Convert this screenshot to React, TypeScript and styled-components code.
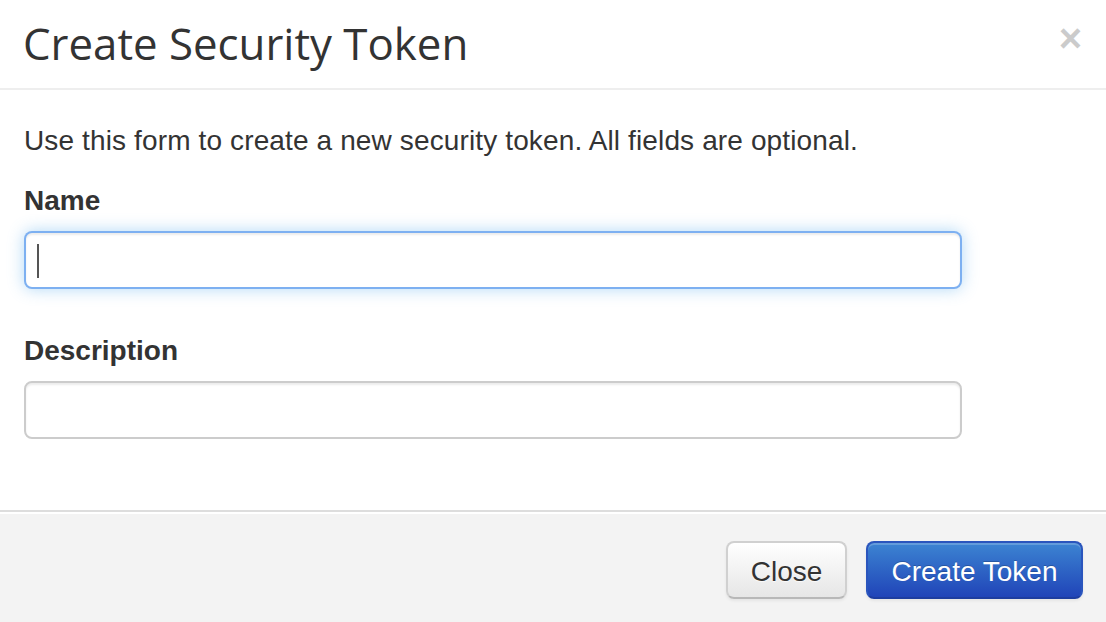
import React from "react";
import styled, { createGlobalStyle } from "styled-components";

const Global = createGlobalStyle`
  html, body { margin: 0; padding: 0; background: #fff; }
  body { font-family: "Liberation Sans", Arial, sans-serif; color: #333; }
  * { box-sizing: border-box; }
`;

const Dialog = styled.div`
  width: 1106px;
  height: 622px;
  display: flex;
  flex-direction: column;
  background: #fff;
  overflow: hidden;
`;

const Header = styled.div`
  height: 90px;
  flex: none;
  display: flex;
  align-items: center;
  justify-content: space-between;
  padding: 0 24px 0 23px;
  border-bottom: 2px solid #eeeeee;
`;

const Title = styled.h3`
  margin: 0;
  font-family: "Open Sans", "Noto Sans", sans-serif;
  font-weight: 400;
  font-size: 43.8px;
  line-height: 60px;
  color: #333;
  padding-bottom: 2px;
`;

const CloseX = styled.button`
  border: 0;
  background: none;
  padding: 0;
  margin-top: -12px;
  font-family: "Liberation Sans", Arial, sans-serif;
  font-weight: 700;
  font-size: 40px;
  line-height: 40px;
  color: #000;
  opacity: 0.2;
  cursor: pointer;
`;

const Body = styled.div`
  flex: none;
  height: 420px;
  padding: 31px 24px 0 24px;
`;

const Intro = styled.p`
  margin: 0 0 20px;
  font-size: 28px;
  line-height: 40px;
  letter-spacing: 0.13px;
`;

const Field = styled.div<{ $gap?: number }>`
  position: relative;
  margin-bottom: ${(p) => p.$gap ?? 0}px;
`;

const Label = styled.label`
  display: block;
  font-size: 28px;
  line-height: 40px;
  font-weight: 700;
  margin-bottom: 10px;
`;

const Input = styled.input<{ $focused?: boolean }>`
  display: block;
  width: 938px;
  height: 58px;
  padding: 8px 14px;
  font-family: "Liberation Sans", Arial, sans-serif;
  font-size: 28px;
  color: #555;
  background: #fff;
  border-radius: 8px;
  outline: none;
  border: 2px solid ${(p) => (p.$focused ? "rgba(82,150,236,0.75)" : "#cccccc")};
  box-shadow: ${(p) =>
    p.$focused
      ? "inset 0 2px 2px rgba(0,0,0,0.075), 0 0 16px rgba(82,168,236,0.45)"
      : "inset 0 2px 2px rgba(0,0,0,0.075)"};
`;

const Caret = styled.span`
  position: absolute;
  left: 13px;
  top: 63px;
  width: 2px;
  height: 34px;
  background: #555;
`;

const Footer = styled.div`
  flex: 1;
  display: flex;
  justify-content: flex-end;
  align-items: flex-start;
  gap: 19px;
  padding: 29px 23px 0 0;
  background: #f3f3f3;
  border-top: 2px solid #dddddd;
  box-shadow: inset 0 2px 0 #fff;
`;

const Button = styled.button<{ $primary?: boolean; $w: number }>`
  width: ${(p) => p.$w}px;
  height: 58px;
  border-radius: 8px;
  font-family: "Liberation Sans", Arial, sans-serif;
  font-size: 28px;
  line-height: 40px;
  padding: 4px 0 0;
  cursor: pointer;
  color: ${(p) => (p.$primary ? "#fff" : "#333")};
  background: ${(p) =>
    p.$primary
      ? "linear-gradient(to bottom, #3c84d2, #2044b8)"
      : "linear-gradient(to bottom, #ffffff, #e6e6e6)"};
  border: 2px solid
    ${(p) => (p.$primary ? "#2a55bd" : "#d0d0d0")};
  border-bottom-color: ${(p) => (p.$primary ? "#1d3d9f" : "#b8b8b8")};
  box-shadow: inset 0 2px 0 rgba(255, 255, 255, 0.2), 0 2px 3px rgba(0, 0, 0, 0.06);
  text-shadow: ${(p) => (p.$primary ? "0 -1px 0 rgba(0,0,0,0.2)" : "0 1px 1px rgba(255,255,255,0.75)")};
`;

export default function App() {
  return (
    <>
      <Global />
      <Dialog>
        <Header>
          <Title>Create Security Token</Title>
          <CloseX aria-label="Close">×</CloseX>
        </Header>
        <Body>
          <Intro>Use this form to create a new security token. All fields are optional.</Intro>
          <Field $gap={42}>
            <Label htmlFor="name">Name</Label>
            <Input id="name" $focused />
            <Caret />
          </Field>
          <Field>
            <Label htmlFor="desc">Description</Label>
            <Input id="desc" />
          </Field>
        </Body>
        <Footer>
          <Button $w={121}>Close</Button>
          <Button $primary $w={217}>Create Token</Button>
        </Footer>
      </Dialog>
    </>
  );
}
